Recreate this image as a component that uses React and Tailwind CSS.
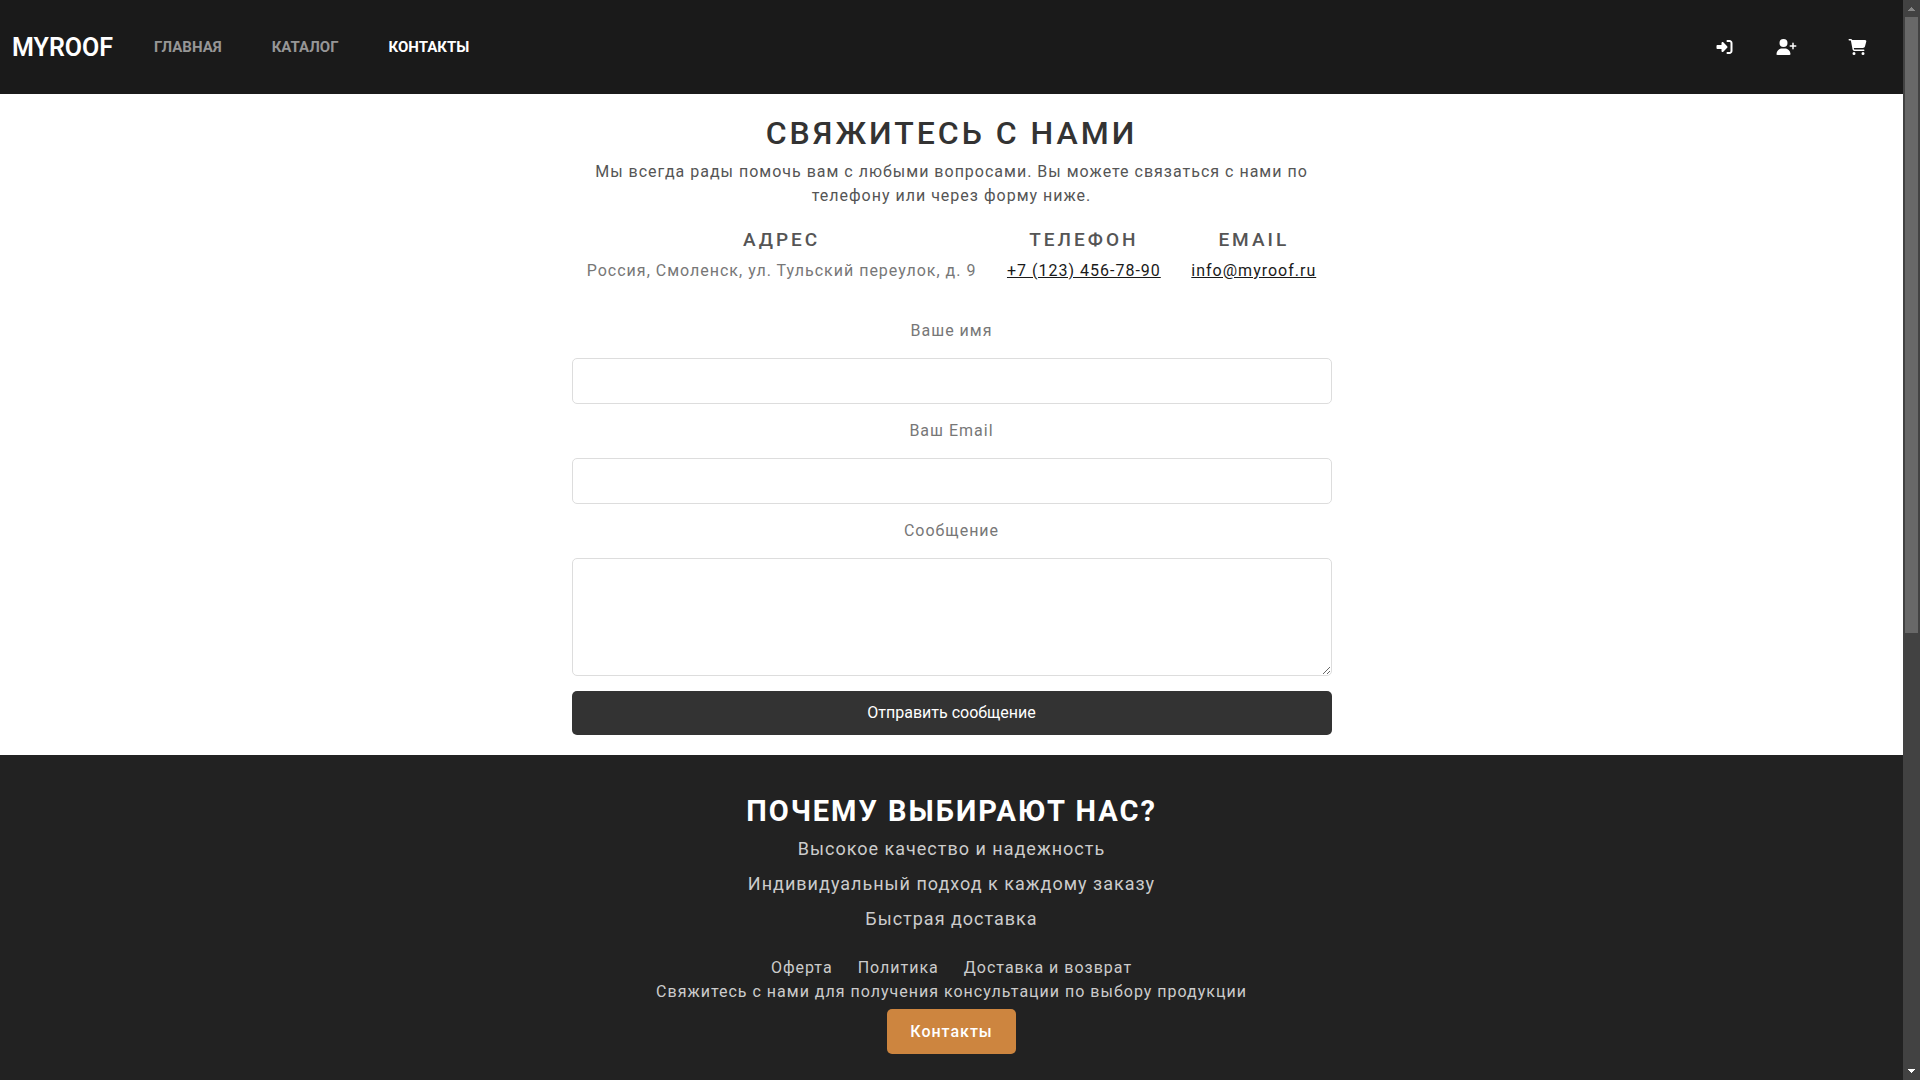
import React from "react";
import { FaRightToBracket, FaUserPlus, FaCartShopping } from "react-icons/fa6";

const navLinks = [
  { label: "Главная", active: false },
  { label: "Каталог", active: false },
  { label: "Контакты", active: true },
];

const actions = [
  { label: "Войти", Icon: FaRightToBracket, size: "w-[17px]" },
  { label: "Регистрация", Icon: FaUserPlus, size: "w-[21px]" },
  { label: "Корзина", Icon: FaCartShopping, size: "ml-2 w-[19px]" },
];

const reasons = [
  "Высокое качество и надежность",
  "Индивидуальный подход к каждому заказу",
  "Быстрая доставка",
];

const footerLinks = ["Оферта", "Политика", "Доставка и возврат"];

function Header() {
  return (
    <header className="flex h-[94px] items-center justify-between bg-[#1a1a1a] pl-3 pr-9">
      <div className="flex items-center pt-px">
        <a href="#home" className="text-[25px] font-semibold text-white">
          MYROOF
        </a>
        <nav className="ml-[41px] flex gap-[50px] text-[15px] font-bold uppercase">
          {navLinks.map(({ label, active }) => (
            <a key={label} href="#nav" className={active ? "text-white" : "text-[#969696]"}>
              {label}
            </a>
          ))}
        </nav>
      </div>
      <div className="flex items-center gap-[43px] text-white">
        {actions.map(({ label, Icon, size }) => (
          <a key={label} href="#action" aria-label={label} className={size}>
            <Icon className="h-4 w-full" />
          </a>
        ))}
      </div>
    </header>
  );
}

function ContactColumn({ title, children }) {
  return (
    <div>
      <h2 className="text-[19px] font-medium leading-6 tracking-[3px] text-[#555]">{title}</h2>
      <p className="mt-[7px] leading-6">{children}</p>
    </div>
  );
}

function Contact() {
  return (
    <main className="mx-auto w-full max-w-[800px] px-5 pb-5 pt-5 text-center tracking-[1px] text-[#777]">
      <h1 className="text-[32px] font-medium leading-[38px] tracking-[3px] text-[#333]">СВЯЖИТЕСЬ С НАМИ</h1>
      <p className="mt-2 px-4 leading-6 text-[#555]">
        Мы всегда рады помочь вам с любыми вопросами. Вы можете связаться с нами по телефону или через форму ниже.
      </p>
      <div className="mt-5 flex justify-around">
        <ContactColumn title="АДРЕС">Россия, Смоленск, ул. Тульский переулок, д. 9</ContactColumn>
        <ContactColumn title="ТЕЛЕФОН">
          <a href="tel:+71234567890" className="text-[#1a1a1a] underline">+7 (123) 456-78-90</a>
        </ContactColumn>
        <ContactColumn title="EMAIL">
          <a href="mailto:info@myroof.ru" className="text-[#1a1a1a] underline">info@myroof.ru</a>
        </ContactColumn>
      </div>
      <form className="mt-9 flex flex-col">
        <label htmlFor="name" className="leading-6">Ваше имя</label>
        <input id="name" type="text" className="mt-[15px] h-[46px] rounded-[5px] border border-[#ddd] bg-white px-3" />
        <label htmlFor="email" className="mt-[15px] leading-6">Ваш Email</label>
        <input id="email" type="email" className="mt-[15px] h-[46px] rounded-[5px] border border-[#ddd] bg-white px-3" />
        <label htmlFor="message" className="mt-[15px] leading-6">Сообщение</label>
        <textarea id="message" className="mt-[15px] h-[118px] resize-y rounded-[5px] border border-[#ddd] bg-white p-3" />
        <button type="button" className="mt-[15px] h-11 rounded-[5px] bg-[#333] tracking-normal text-white">
          Отправить сообщение
        </button>
      </form>
    </main>
  );
}

function Footer() {
  return (
    <footer className="flex-1 bg-[#222] pb-[26px] pt-10 text-center tracking-[1px] text-[#ccc]">
      <h2 className="text-[29px] font-bold leading-8 tracking-[2px] text-white">ПОЧЕМУ ВЫБИРАЮТ НАС?</h2>
      <ul className="mt-2 flex flex-col gap-2 text-[18px] leading-[27px]">
        {reasons.map((reason) => (
          <li key={reason}>{reason}</li>
        ))}
      </ul>
      <nav className="mt-6 flex justify-center gap-[25px] leading-6">
        {footerLinks.map((label) => (
          <a key={label} href="#info">{label}</a>
        ))}
      </nav>
      <p className="leading-6">Свяжитесь с нами для получения консультации по выбору продукции</p>
      <a href="#contacts" className="mt-[5px] inline-block rounded-[5px] bg-[#cd853f] px-[23px] py-[10px] font-medium leading-[25px] text-white">
        Контакты
      </a>
    </footer>
  );
}

function Scrollbar() {
  return (
    <div aria-hidden="true" className="sticky top-0 flex h-screen w-[17px] shrink-0 flex-col items-center bg-[#424242]">
      <svg viewBox="0 0 17 17" className="h-[17px] w-full shrink-0" shapeRendering="crispEdges">
        <path d="M5 11 8.5 7 12 11Z" fill="#868686" />
      </svg>
      <div className="h-[57%] w-[13px] bg-[#686868]" />
      <svg viewBox="0 0 17 17" className="mt-auto h-[17px] w-full shrink-0" shapeRendering="crispEdges">
        <path d="M5 6 8.5 10 12 6Z" fill="#fff" />
      </svg>
    </div>
  );
}

export default function App() {
  return (
    <div className="flex min-h-screen bg-white font-['Roboto',sans-serif] text-base">
      <div className="flex min-w-0 flex-1 flex-col">
        <Header />
        <Contact />
        <Footer />
      </div>
      <Scrollbar />
    </div>
  );
}
